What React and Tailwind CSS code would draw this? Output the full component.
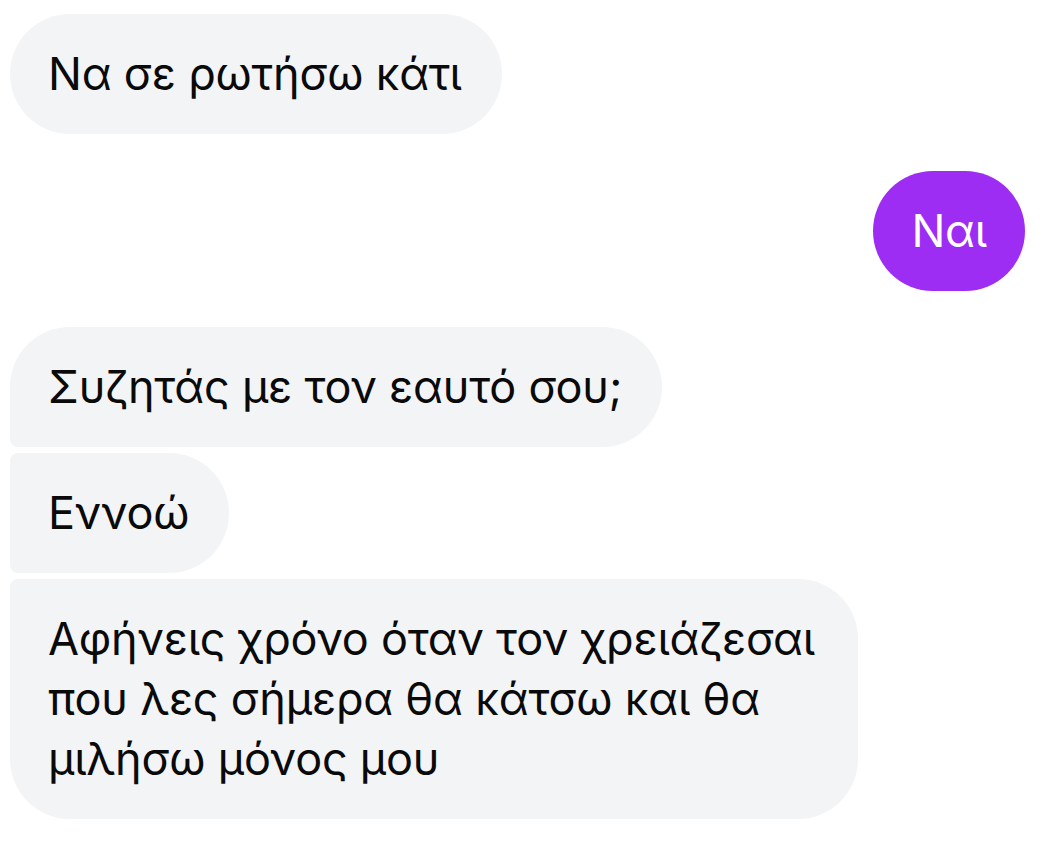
const Incoming = ({ children, corners, width = "" }) => (
  <div className="flex justify-start">
    <div
      className={`bg-[#f3f4f6] py-[30px] pl-[38px] pr-[40px] text-[45px] leading-[60px] tracking-[-0.2px] text-[#0a0a0a] ${width} ${corners}`}
    >
      {children}
    </div>
  </div>
);

const Outgoing = ({ text }) => (
  <div className="flex justify-end">
    <div className="rounded-[60px] bg-[#9d2df3] py-[30px] pl-[38px] pr-[38px] text-[45px] leading-[60px] tracking-[-0.2px] text-white">
      {text}
    </div>
  </div>
);

export default function App() {
  return (
    <div
      className="min-h-screen bg-white pl-[10px] pr-[23px] pt-[14px] pb-8"
      style={{ fontFamily: "Inter, 'Noto Sans', sans-serif" }}
    >
      <div className="flex flex-col">
        <Incoming corners="rounded-[60px]">Να σε ρωτήσω κάτι</Incoming>
        <div className="mt-[37px]">
          <Outgoing text="Ναι" />
        </div>
        <div className="mt-[36px] flex flex-col gap-[6px]">
          <Incoming corners="rounded-tl-[60px] rounded-tr-[60px] rounded-br-[60px] rounded-bl-[8px]">
            Συζητάς με τον εαυτό σου;
          </Incoming>
          <Incoming corners="rounded-tl-[8px] rounded-tr-[60px] rounded-br-[60px] rounded-bl-[8px]">
            Εννοώ
          </Incoming>
          <Incoming
            width="w-[848px]"
            corners="rounded-tl-[8px] rounded-tr-[60px] rounded-br-[60px] rounded-bl-[60px]"
          >
            <div className="whitespace-nowrap">Αφήνεις χρόνο όταν τον χρειάζεσαι</div>
            <div className="whitespace-nowrap">που λες σήμερα θα κάτσω και θα</div>
            <div className="whitespace-nowrap">μιλήσω μόνος μου</div>
          </Incoming>
        </div>
      </div>
    </div>
  );
}
